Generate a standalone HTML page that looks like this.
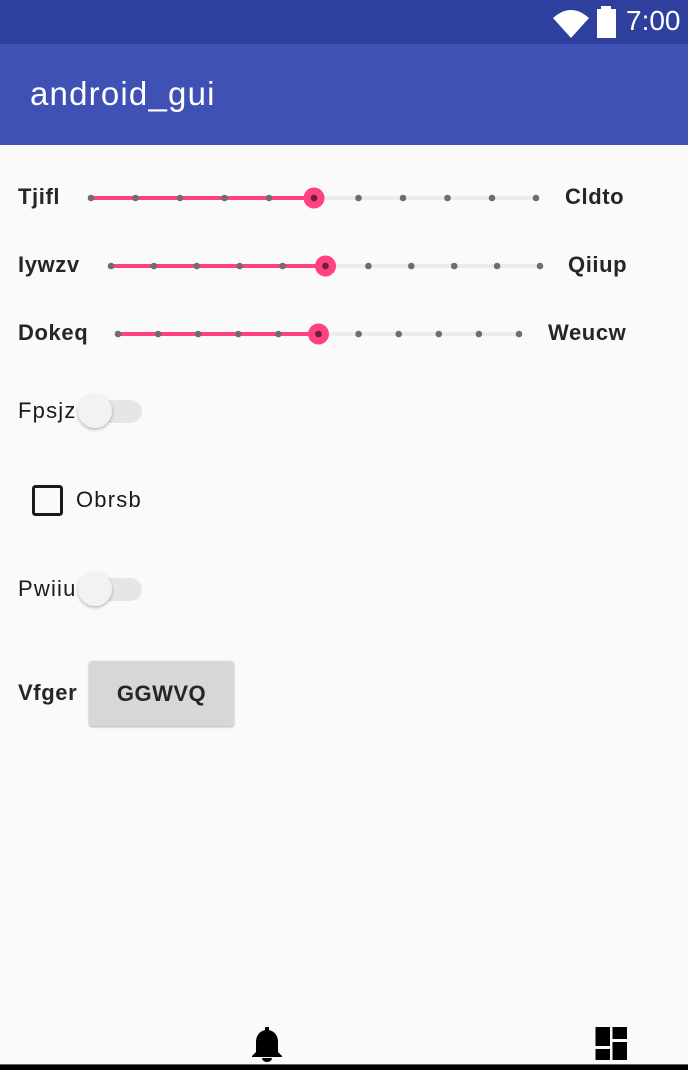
<!DOCTYPE html>
<html><head><meta charset="utf-8"><style>
*{margin:0;padding:0;box-sizing:border-box}
body{width:688px;height:1070px;background:#fafafa;position:relative;overflow:hidden;font-family:"Liberation Sans",sans-serif;color:#212121}
.a{position:absolute;white-space:nowrap}
.lb{font-size:22px;font-weight:bold;color:#262626;letter-spacing:0.6px}
.lr{font-size:22px;color:#1a1a1a;letter-spacing:1.2px}
</style></head><body>
<div class="a" style="left:0;top:0;width:688px;height:44px;background:#2f3f9e"></div>
<div class="a" style="left:0;top:44px;width:688px;height:101px;background:#3f51b5"></div>
<svg class="a" style="left:552px;top:6px" width="46" height="34" viewBox="0 0 46 34">
<path d="M1 12 Q19 -4 37 12 L19 32 Z" fill="#fff"/>
</svg>
<svg class="a" style="left:596px;top:6px" width="24" height="34"><rect x="5" y="0" width="10" height="4" fill="#fff"/><rect x="1" y="3" width="19" height="29" fill="#fff"/></svg>
<div class="a" style="left:626px;top:5px;font-size:28px;color:#fff">7:00</div>
<div class="a" style="left:30px;top:75px;font-size:33px;color:#fff;letter-spacing:1.2px">android_gui</div>

<svg class="a" style="left:0;top:0" width="688" height="760">
<g>
<line x1="91" y1="198" x2="536" y2="198" stroke="#ececec" stroke-width="4"/>
<line x1="91" y1="198" x2="314" y2="198" stroke="#ff4081" stroke-width="4"/>
<g fill="#6e6e6e"><circle cx="91" cy="198" r="3.3"/><circle cx="135.5" cy="198" r="3.3"/><circle cx="180" cy="198" r="3.3"/><circle cx="224.5" cy="198" r="3.3"/><circle cx="269" cy="198" r="3.3"/><circle cx="358.5" cy="198" r="3.3"/><circle cx="403" cy="198" r="3.3"/><circle cx="447.5" cy="198" r="3.3"/><circle cx="492" cy="198" r="3.3"/><circle cx="536" cy="198" r="3.3"/></g>
<circle cx="314" cy="198" r="10.5" fill="#ff4081"/><circle cx="314" cy="198" r="3.3" fill="#6e1d3a"/>
</g>
<g>
<line x1="111" y1="266" x2="540" y2="266" stroke="#ececec" stroke-width="4"/>
<line x1="111" y1="266" x2="325" y2="266" stroke="#ff4081" stroke-width="4"/>
<g fill="#6e6e6e"><circle cx="111" cy="266" r="3.3"/><circle cx="153.9" cy="266" r="3.3"/><circle cx="196.8" cy="266" r="3.3"/><circle cx="239.7" cy="266" r="3.3"/><circle cx="282.6" cy="266" r="3.3"/><circle cx="368.4" cy="266" r="3.3"/><circle cx="411.3" cy="266" r="3.3"/><circle cx="454.2" cy="266" r="3.3"/><circle cx="497.1" cy="266" r="3.3"/><circle cx="540" cy="266" r="3.3"/></g>
<circle cx="325.5" cy="266" r="10.5" fill="#ff4081"/><circle cx="325.5" cy="266" r="3.3" fill="#6e1d3a"/>
</g>
<g>
<line x1="118" y1="334" x2="519" y2="334" stroke="#ececec" stroke-width="4"/>
<line x1="118" y1="334" x2="319" y2="334" stroke="#ff4081" stroke-width="4"/>
<g fill="#6e6e6e"><circle cx="118" cy="334" r="3.3"/><circle cx="158.1" cy="334" r="3.3"/><circle cx="198.2" cy="334" r="3.3"/><circle cx="238.3" cy="334" r="3.3"/><circle cx="278.4" cy="334" r="3.3"/><circle cx="358.6" cy="334" r="3.3"/><circle cx="398.7" cy="334" r="3.3"/><circle cx="438.8" cy="334" r="3.3"/><circle cx="478.9" cy="334" r="3.3"/><circle cx="519" cy="334" r="3.3"/></g>
<circle cx="318.5" cy="334" r="10.5" fill="#ff4081"/><circle cx="318.5" cy="334" r="3.3" fill="#6e1d3a"/>
</g>
<defs><filter id="s" x="-50%" y="-50%" width="200%" height="200%"><feDropShadow dx="0" dy="1.5" stdDeviation="1.5" flood-color="#000" flood-opacity="0.3"/></filter></defs>
<rect x="78" y="400" width="64" height="23" rx="11.5" fill="#e6e6e6"/>
<circle cx="95" cy="411" r="17" fill="#f2f2f2" filter="url(#s)"/>
<rect x="78" y="578" width="64" height="23" rx="11.5" fill="#e6e6e6"/>
<circle cx="95" cy="589" r="17" fill="#f2f2f2" filter="url(#s)"/>
<rect x="33.5" y="486.5" width="28" height="28" rx="2" fill="none" stroke="#1a1a1a" stroke-width="3"/>
</svg>

<div class="a lb" style="left:18px;top:184px">Tjifl</div>
<div class="a lb" style="left:565px;top:184px">Cldto</div>
<div class="a lb" style="left:18px;top:252px">Iywzv</div>
<div class="a lb" style="left:568px;top:252px">Qiiup</div>
<div class="a lb" style="left:18px;top:320px">Dokeq</div>
<div class="a lb" style="left:548px;top:320px">Weucw</div>
<div class="a lr" style="left:18px;top:398px">Fpsjz</div>
<div class="a lr" style="left:76px;top:487px">Obrsb</div>
<div class="a lr" style="left:18px;top:576px">Pwiiu</div>
<div class="a lb" style="left:18px;top:680px">Vfger</div>
<div class="a" style="left:89px;top:661px;width:145px;height:65px;background:#d6d7d7;border-radius:3px;box-shadow:0 1px 2px rgba(0,0,0,.3);font-size:22px;font-weight:bold;color:#262626;text-align:center;line-height:65px;letter-spacing:0.5px">GGWVQ</div>

<svg class="a" style="left:250px;top:1025px" width="34" height="38" viewBox="0 0 34 38">
<path d="M15 2 h4 v3 c6 1.5 9 6 9 12 v10 l4 4 v1 H2 v-1 l4 -4 V17 c0 -6 3 -10.5 9 -12 Z" fill="#000"/>
<path d="M12 33 h10 a5 4 0 0 1 -10 0Z" fill="#000"/>
</svg>
<svg class="a" style="left:595px;top:1027px" width="34" height="34">
<rect x="0.5" y="0" width="14.5" height="19" fill="#000"/>
<rect x="0.5" y="22" width="14.5" height="11" fill="#000"/>
<rect x="17.5" y="0" width="14.5" height="12" fill="#000"/>
<rect x="17.5" y="15" width="14.5" height="18" fill="#000"/>
</svg>
<div class="a" style="left:0;top:1064px;width:688px;height:6px;background:#000;border-top:1px solid #666"></div>
</body></html>
